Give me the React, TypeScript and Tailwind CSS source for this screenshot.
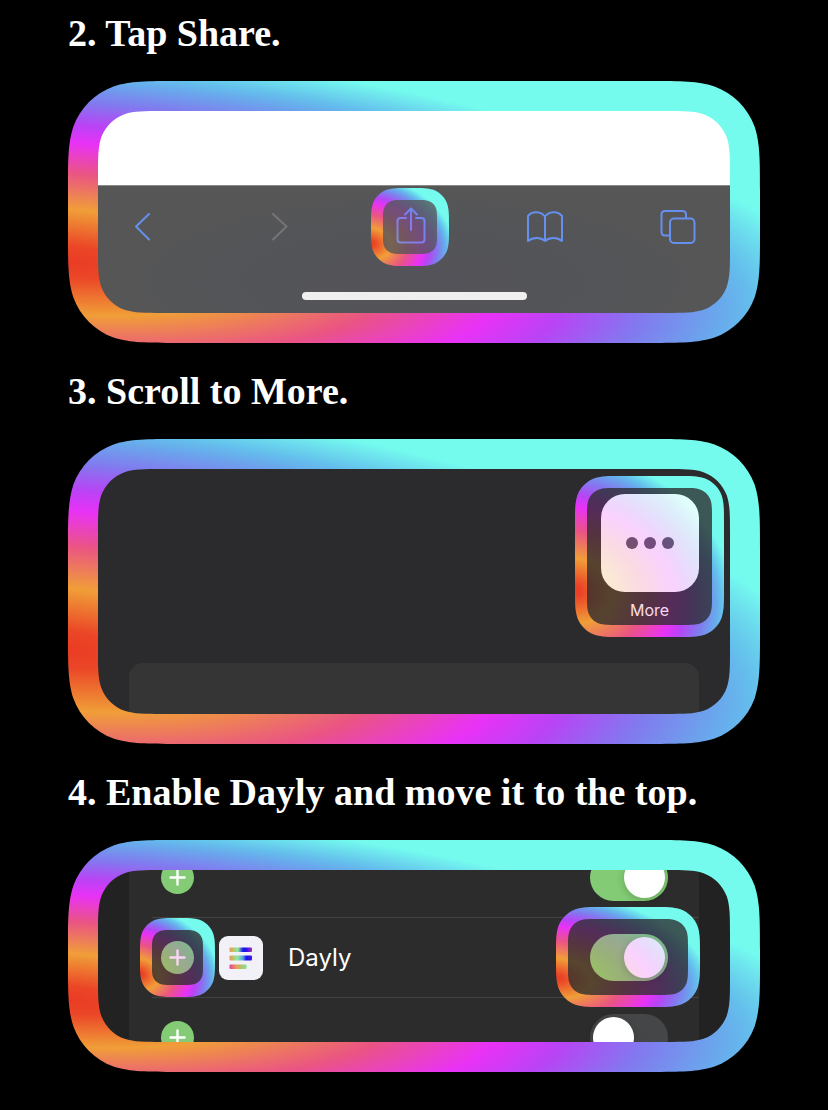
import React, { useId } from "react";

type Box = { width: number; height: number; radius: number; inset: number };

/* Outline of a rectangle with continuous-curvature corners. */
function squircle({ width, height, radius, inset }: Box): string {
  const r = Math.min(radius, (Math.min(width, height) / 2 - inset) / 1.52867);
  const l = inset;
  const t = inset;
  const R = width - inset;
  const B = height - inset;
  const a = 1.52867 * r;
  const b = 1.08849 * r;
  const c = 0.86841 * r;
  const d = 0.63149 * r;
  const e = 0.07491 * r;
  const f = 0.37282 * r;
  const g = 0.16906 * r;
  return [
    `M${l + a} ${t}H${R - a}`,
    `C${R - b} ${t} ${R - c} ${t} ${R - d} ${t + e}`,
    `C${R - f} ${t + g} ${R - g} ${t + f} ${R - e} ${t + d}`,
    `C${R} ${t + c} ${R} ${t + b} ${R} ${t + a}`,
    `V${B - a}`,
    `C${R} ${B - b} ${R} ${B - c} ${R - e} ${B - d}`,
    `C${R - g} ${B - f} ${R - f} ${B - g} ${R - d} ${B - e}`,
    `C${R - c} ${B} ${R - b} ${B} ${R - a} ${B}`,
    `H${l + a}`,
    `C${l + b} ${B} ${l + c} ${B} ${l + d} ${B - e}`,
    `C${l + f} ${B - g} ${l + g} ${B - f} ${l + e} ${B - d}`,
    `C${l} ${B - c} ${l} ${B - b} ${l} ${B - a}`,
    `V${t + a}`,
    `C${l} ${t + b} ${l} ${t + c} ${l + e} ${t + d}`,
    `C${l + g} ${t + f} ${l + f} ${t + g} ${l + d} ${t + e}`,
    `C${l + c} ${t} ${l + b} ${t} ${l + a} ${t}Z`,
  ].join("");
}

type GlowProps = { width: number; height: number; radius: number; stroke: number; tinted?: boolean };

const COLORS = ["#ea3c24", "#eb4627", "#f09e38", "#ea5484", "#e932f7", "#b943f5", "#8279ef", "#69a8ec", "#64beec", "#74fbee"];
const WIDE_STOPS = [0, 0.06, 0.2, 0.34, 0.455, 0.525, 0.61, 0.69, 0.725, 0.82];
const SMALL_STOPS = [0, 0.04, 0.2, 0.37, 0.52, 0.59, 0.68, 0.755, 0.785, 0.865];

function Glow({ width, height, radius, stroke, tinted = false }: GlowProps) {
  const id = useId();
  const outer = squircle({ width, height, radius, inset: 0 });
  const inner = squircle({ width, height, radius: radius - stroke, inset: stroke });
  const stops = tinted ? SMALL_STOPS : WIDE_STOPS;
  return (
    <svg
      aria-hidden="true"
      viewBox={`0 0 ${width} ${height}`}
      preserveAspectRatio="none"
      className="pointer-events-none h-full w-full"
    >
      <defs>
        <radialGradient
          id={id}
          cx="0"
          cy="0"
          r="1"
          gradientTransform={tinted ? "matrix(1.25 0.13 0 1 0 0.71)" : "matrix(1.364 0.245 0 1 0 0.69)"}
        >
          {COLORS.map((color, i) => (
            <stop key={color} offset={stops[i]} stopColor={color} />
          ))}
        </radialGradient>
      </defs>
      <path d={outer + inner} fillRule="evenodd" fill={`url(#${id})`} />
      {tinted && <path d={outer} fill={`url(#${id})`} fillOpacity="0.22" />}
    </svg>
  );
}

function Frame({ height, children }: { height: number; children: React.ReactNode }) {
  return (
    <div className="relative p-[30px]">
      <div className="overflow-hidden rounded-[28px]">{children}</div>
      <div className="pointer-events-none absolute inset-0">
        <Glow width={692} height={height} radius={72} stroke={30} />
      </div>
    </div>
  );
}

function Step({ title, children }: { title: string; children: React.ReactNode }) {
  return (
    <section>
      <h2 className="py-6 font-['Liberation_Serif',serif] text-[38px] leading-[48px] font-bold text-white">{title}</h2>
      {children}
    </section>
  );
}

function ToolButton({
  label,
  muted = false,
  highlight = false,
  children,
}: {
  label: string;
  muted?: boolean;
  highlight?: boolean;
  children: React.ReactNode;
}) {
  return (
    <button
      type="button"
      aria-label={label}
      className={muted ? "relative size-9 text-[#757577]" : "relative size-9 text-[#6690ee]"}
    >
      <svg
        viewBox="0 0 36 36"
        fill="none"
        stroke="currentColor"
        strokeWidth="2"
        strokeLinecap="round"
        strokeLinejoin="round"
        className="size-9 overflow-visible"
      >
        {children}
      </svg>
      {highlight && (
        <span className="absolute -inset-[21px]">
          <Glow width={78} height={78} radius={25} stroke={12} tinted />
        </span>
      )}
    </button>
  );
}

function SafariBar() {
  return (
    <div>
      <div className="h-[74px] bg-white" />
      <div className="border-t border-[#8a8a8a] bg-[radial-gradient(ellipse_at_50%_75%,#535359_0%,#545558_45%,#565656_70%)] pt-[23px] pb-[13px]">
        <div className="flex justify-between pr-[35px] pl-[27px]">
          <ToolButton label="Back">
            <path d="M24 5L11 17.5L24 30.5" />
          </ToolButton>
          <ToolButton label="Forward" muted>
            <path d="M14 5L27.500 17.500L14 30.500" />
          </ToolButton>
          <ToolButton label="Share" highlight>
            <path d="M14 9H8.500Q5.500 9 5.500 12V30.500Q5.500 33.500 8.500 33.500H29.500Q32.500 33.500 32.500 30.500V12Q32.500 9 29.500 9H24" />
            <path d="M19 21V-.5M13 5.500L19-.5L25 5.500" />
          </ToolButton>
          <ToolButton label="Bookmarks">
            <path d="M19 7.500C15 2.500 6.500 1.500 2 7V32C7 28 14.500 28 19 32C23.500 28 31 28 36 32V7C31.500 1.500 23 2.500 19 7.500V32" />
          </ToolButton>
          <ToolButton label="Tabs">
            <rect x="11" y="9.500" width="24.500" height="24.500" rx="4" />
            <path d="M10.500 26.500H6Q2.500 26.500 2.500 23V5.500Q2.500 2 6 2H23.500Q27 2 27 5.500V9" />
          </ToolButton>
        </div>
        <div className="mx-auto mt-[47px] h-2 w-[225px] rounded-full bg-[#efefef]" />
      </div>
    </div>
  );
}

function ShareSheet() {
  return (
    <div className="bg-[#2b2a2c] pt-[7px]">
      <div className="flex justify-end pr-[6px]">
        <button
          type="button"
          className="relative flex h-[161px] w-[149px] flex-col items-center pt-[18px] text-white"
        >
          <span className="flex size-[98px] items-center justify-center gap-1.5 rounded-3xl bg-white">
            <span className="size-3 rounded-full bg-[#54535a]" />
            <span className="size-3 rounded-full bg-[#54535a]" />
            <span className="size-3 rounded-full bg-[#54535a]" />
          </span>
          <span className="mt-1.5 font-[Inter,sans-serif] text-base leading-6">More</span>
          <span className="absolute inset-0">
            <Glow width={149} height={161} radius={31} stroke={12} tinted />
          </span>
        </button>
      </div>
      <div className="mx-[31px] mt-[26px] h-[51px] rounded-t-[14px] bg-[#353535]" />
    </div>
  );
}

function DaylyIcon() {
  const id = useId();
  return (
    <svg viewBox="0 0 44 44" className="size-11 rounded-[9px] bg-[#f2f1f7]" aria-hidden="true">
      <defs>
        <linearGradient id={id + "a"}>
          <stop offset="0" stopColor="#e99b4a" />
          <stop offset="0.38" stopColor="#8deba0" />
          <stop offset="0.6" stopColor="#1a14ec" />
          <stop offset="0.75" stopColor="#2612e8" />
          <stop offset="1" stopColor="#b52cb0" />
        </linearGradient>
        <linearGradient id={id + "b"}>
          <stop offset="0" stopColor="#e89a4c" />
          <stop offset="0.35" stopColor="#8ceaa0" />
          <stop offset="0.6" stopColor="#5aa0e8" />
          <stop offset="0.75" stopColor="#1a10ee" />
          <stop offset="1" stopColor="#4020d8" />
        </linearGradient>
        <linearGradient id={id + "c"}>
          <stop offset="0" stopColor="#e3409c" />
          <stop offset="0.4" stopColor="#e8a055" />
          <stop offset="1" stopColor="#7ee68f" />
        </linearGradient>
      </defs>
      <rect x="10.500" y="11.500" width="22.500" height="4.500" rx="1" fill={`url(#${id}a)`} />
      <rect x="10.500" y="19.500" width="22.500" height="5" rx="1" fill={`url(#${id}b)`} />
      <rect x="10.500" y="28.500" width="17" height="4.500" rx="1" fill={`url(#${id}c)`} />
    </svg>
  );
}

function AppRow({ name, label, on, highlight = false }: { name?: string; label: string; on: boolean; highlight?: boolean }) {
  return (
    <li className="ml-[23px] flex h-20 items-center gap-[25px] border-b border-[#434343] pr-[31px] pl-[9px]">
      <button type="button" aria-label={`Add ${label}`} className="relative size-[33px] rounded-full bg-[#83cb74]">
        <svg viewBox="0 0 33 33" stroke="#fff" strokeWidth="2.4" strokeLinecap="round" className="size-[33px]">
          <path d="M16.500 9.500V23.500M9.500 16.500H23.500" />
        </svg>
        {highlight && (
          <span className="absolute -inset-x-[21px] -inset-y-[23px]">
            <Glow width={75} height={79} radius={25} stroke={12} tinted />
          </span>
        )}
      </button>
      {name && (
        <>
          <DaylyIcon />
          <span className="font-[Inter,sans-serif] text-2xl leading-8 text-white">{name}</span>
        </>
      )}
      <span className="relative ml-auto h-[47px] w-[78px]">
        <input
          type="checkbox"
          defaultChecked={on}
          aria-label={`Enable ${label}`}
          className="block h-[47px] w-[78px] appearance-none rounded-full bg-[#454648] p-[3px] before:block before:size-[41px] before:rounded-full before:bg-white before:shadow-[0_2px_8px_rgba(0,0,0,0.2)] before:content-[''] checked:bg-[#83cb74] checked:before:ml-[31px]"
        />
        {highlight && (
          <span className="pointer-events-none absolute -top-[27px] -right-8 -bottom-[26px] -left-[34px]">
            <Glow width={144} height={100} radius={31} stroke={12} tinted />
          </span>
        )}
      </span>
    </li>
  );
}

function AppList() {
  return (
    <div className="overflow-hidden bg-[#222222] px-[31px]">
      <ul className="-mt-8 -mb-9 bg-[#2c2c2c]">
        <AppRow label="previous app" on />
        <AppRow name="Dayly" label="Dayly" on highlight />
        <AppRow label="next app" on={false} />
      </ul>
    </div>
  );
}

export default function App() {
  return (
    <main className="min-h-screen bg-black px-[68px] pb-[38px]">
      <div className="-mt-[15px] flow-root">
        <Step title="2. Tap Share.">
          <Frame height={262}>
            <SafariBar />
          </Frame>
        </Step>
        <Step title="3. Scroll to More.">
          <Frame height={305}>
            <ShareSheet />
          </Frame>
        </Step>
        <Step title="4. Enable Dayly and move it to the top.">
          <Frame height={232}>
            <AppList />
          </Frame>
        </Step>
      </div>
    </main>
  );
}
